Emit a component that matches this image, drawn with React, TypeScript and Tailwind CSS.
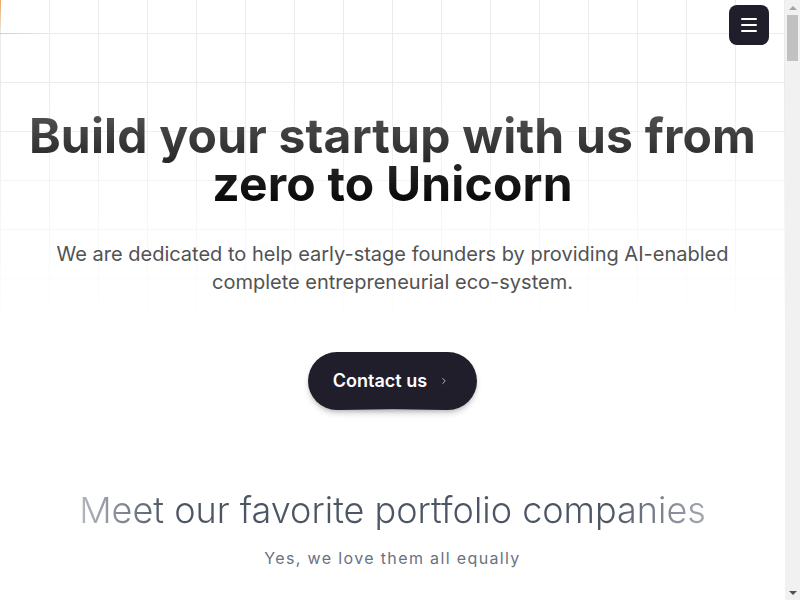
import React from 'react';
import { ChevronRight } from 'lucide-react';

const Navbar = () => {
  return (
    <div className="absolute top-[5px] right-4 z-20">
      <button className="w-10 h-10 rounded-lg bg-[#211e2b] flex flex-col items-center justify-center gap-1">
        <span className="block w-4 h-[2px] bg-white rounded" />
        <span className="block w-4 h-[2px] bg-white rounded" />
        <span className="block w-4 h-[2px] bg-white rounded" />
      </button>
    </div>
  );
};

const Hero = () => {
  return (
    <section className="relative pt-[112px] pb-20 px-4">
      <div className="absolute inset-x-0 top-0 h-[335px] pointer-events-none bg-[linear-gradient(to_right,#ebebeb_1px,transparent_1px),linear-gradient(to_bottom,#ebebeb_1px,transparent_1px)] [background-size:49px_49px] [background-position:0_-16px] [mask-image:linear-gradient(to_bottom,black_25%,transparent_100%)]" />
      <div className="absolute left-0 top-0 w-px h-[34px] bg-gradient-to-b from-[#e9a862] to-transparent" />
      <div className="absolute left-0 top-[33px] h-px w-[49px] bg-gradient-to-r from-[#efc89c] to-transparent" />

      <div className="relative flex flex-col items-center text-center">
        <h1 className="text-5xl font-bold leading-[48px] tracking-[0.004em] bg-gradient-to-b from-[#545454] to-[#050505] bg-clip-text text-transparent">
          Build your startup with us from
          <br />
          zero to Unicorn
        </h1>
        <p className="mt-8 max-w-[700px] text-xl leading-7 text-neutral-600">
          We are dedicated to help early-stage founders by providing AI-enabled complete entrepreneurial eco-system.
        </p>
        <button className="relative mt-14 h-[58px] pl-[25px] pr-7 rounded-full bg-[#211e2b] shadow-md shadow-black/20 flex items-center gap-3 overflow-hidden">
          <span className="text-lg font-semibold text-white">Contact us</span>
          <ChevronRight size={10} strokeWidth={2} className="text-gray-300" />
          <span className="absolute bottom-0 left-8 right-8 h-px bg-gradient-to-r from-transparent via-[#e8953c] to-transparent" />
        </button>
      </div>
    </section>
  );
};

const Portfolio = () => {
  return (
    <section className="px-4 flex flex-col items-center text-center">
      <h2 className="text-4xl font-light leading-10 bg-[linear-gradient(to_right,#b4b9c1_0%,#4b5563_14%,#4b5563_84%,#a3a8b1_100%)] bg-clip-text text-transparent">
        Meet our favorite portfolio companies
      </h2>
      <p className="mt-4 text-base tracking-[0.085em] text-gray-500">Yes, we love them all equally</p>
      <div className="h-[600px]" />
    </section>
  );
};

// page scrollbar as it shows in the capture
const Scrollbar = () => {
  return (
    <div className="w-[15px] shrink-0 bg-[#f1f1f1] flex flex-col items-center">
      <div className="h-[15px] flex items-center justify-center">
        <span className="w-0 h-0 border-x-[4px] border-x-transparent border-b-[4px] border-b-[#a3a3a3]" />
      </div>
      <div className="w-[11px] h-[46px] bg-[#c1c1c1]" />
      <div className="flex-1" />
      <div className="h-[15px] flex items-center justify-center">
        <span className="w-0 h-0 border-x-[4px] border-x-transparent border-t-[4px] border-t-[#505050]" />
      </div>
    </div>
  );
};

export default function App() {
  return (
    <div className="h-screen flex overflow-hidden bg-white font-['Inter',sans-serif]">
      <main className="relative flex-1 min-w-0 overflow-hidden">
        <Navbar />
        <Hero />
        <Portfolio />
      </main>
      <Scrollbar />
    </div>
  );
}
